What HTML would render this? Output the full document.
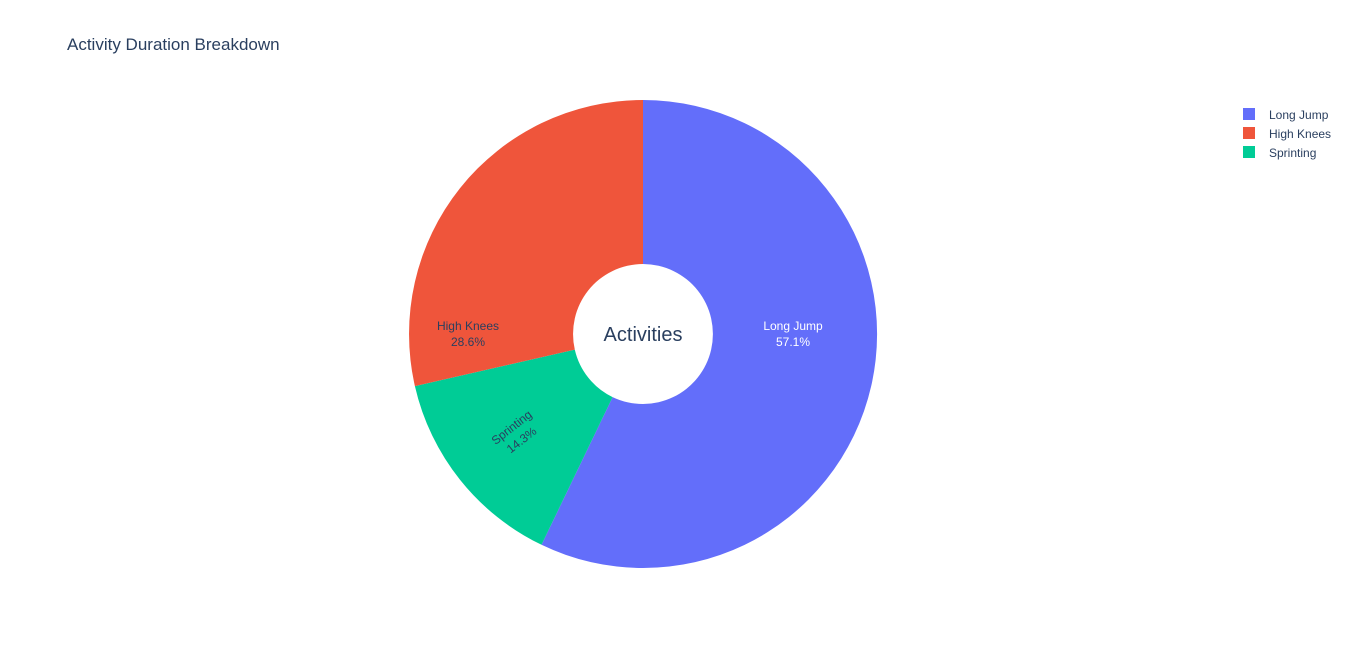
<!DOCTYPE html>
<html><head><meta charset="utf-8"><style>
html,body{margin:0;padding:0;background:#fff;}
svg{display:block;font-family:"Liberation Sans",Arial,sans-serif;}
</style></head><body>
<svg width="1350" height="648" viewBox="0 0 1350 648">
<rect width="1350" height="648" fill="#fff"/>
<text x="67" y="50" font-size="17" fill="#2a3f5f">Activity Duration Breakdown</text>
<path d="M643,100 A234,234 0 1 1 541.5,544.8 L612.6,397.1 A70,70 0 1 0 643,264 Z" fill="#636efa"/>
<path d="M541.5,544.8 A234,234 0 0 1 414.9,386.1 L574.8,349.6 A70,70 0 0 0 612.6,397.1 Z" fill="#00cc96"/>
<path d="M414.9,386.1 A234,234 0 0 1 643,100 L643,264 A70,70 0 0 0 574.8,349.6 Z" fill="#ef553b"/>
<text x="643" y="341" font-size="20" fill="#2a3f5f" text-anchor="middle">Activities</text>
<g font-size="12" text-anchor="middle">
<text x="793" y="330" fill="#fff">Long Jump</text>
<text x="793" y="346" fill="#fff">57.1%</text>
<text x="468" y="330" fill="#2a3f5f">High Knees</text>
<text x="468" y="346" fill="#2a3f5f">28.6%</text>
<g transform="translate(516,433) rotate(-38)">
<text x="0" y="-3" fill="#2a3f5f">Sprinting</text>
<text x="0" y="13" fill="#2a3f5f">14.3%</text>
</g>
</g>
<g font-size="12" fill="#2a3f5f">
<rect x="1243" y="108" width="12" height="12" fill="#636efa"/>
<text x="1269" y="119">Long Jump</text>
<rect x="1243" y="127" width="12" height="12" fill="#ef553b"/>
<text x="1269" y="138">High Knees</text>
<rect x="1243" y="146" width="12" height="12" fill="#00cc96"/>
<text x="1269" y="157">Sprinting</text>
</g>
</svg>
</body></html>
